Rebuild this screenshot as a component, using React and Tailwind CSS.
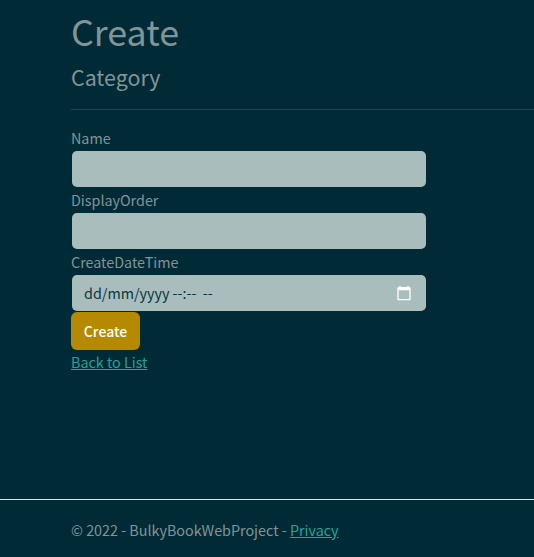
const inputBox = "h-[38px] w-[356px] rounded-[6px] border border-transparent bg-[#a9bdbd] bg-clip-padding pl-3 pr-[14px] text-[#073642]";

function Field({ label, children }) {
  return (
    <div>
      <label className="block h-6 leading-6">{label}</label>
      {children}
    </div>
  );
}

function CalendarIcon() {
  return (
    <svg width="16" height="16" viewBox="0 0 24 24" fill="#fff">
      <path d="M20 3h-1V1h-2v2H7V1H5v2H4c-1.1 0-2 .9-2 2v16c0 1.1.9 2 2 2h16c1.1 0 2-.9 2-2V5c0-1.1-.9-2-2-2zm0 18H4V8h16v13z" />
    </svg>
  );
}

export default function App() {
  return (
    <div className="flex h-[557px] w-full flex-col overflow-hidden bg-[#002b36] font-['Noto_Sans_CJK_SC','Noto_Sans',sans-serif] text-[14.33px] leading-6 text-[#839496]">
      <main className="h-[499px] shrink-0 pl-[71px] pt-[8px]">
        <h1 className="mb-2 h-12 text-[35.8px] leading-[44px]">Create</h1>
        <h4 className="mb-4 h-[29px] text-[21.4px] leading-[25px]">Category</h4>
        <hr className="mb-4 h-px border-0 bg-[#214550]" />
        <form>
          <Field label="Name">
            <input type="text" className={`block ${inputBox}`} />
          </Field>
          <Field label="DisplayOrder">
            <input type="text" className={`block ${inputBox}`} />
          </Field>
          <Field label="CreateDateTime">
            <div className={`flex items-center justify-between ${inputBox}`}>
              <span className="whitespace-pre">dd/mm/yyyy --:-- <span className="ml-[3px]">--</span></span>
              <CalendarIcon />
            </div>
          </Field>
          <button type="button" className="block h-[38px] w-[69px] rounded-[6px] bg-[#b58900] text-center text-[14px] font-medium leading-6 text-white">
            Create
          </button>
        </form>
        <a className="text-[#2aa198] underline">Back to List</a>
      </main>
      <footer className="shrink-0 border-t border-[#dee2e6] pl-[71px] leading-[60px]">
        © 2022 - BulkyBookWebProject - <a className="text-[#2aa198] underline">Privacy</a>
      </footer>
    </div>
  );
}
